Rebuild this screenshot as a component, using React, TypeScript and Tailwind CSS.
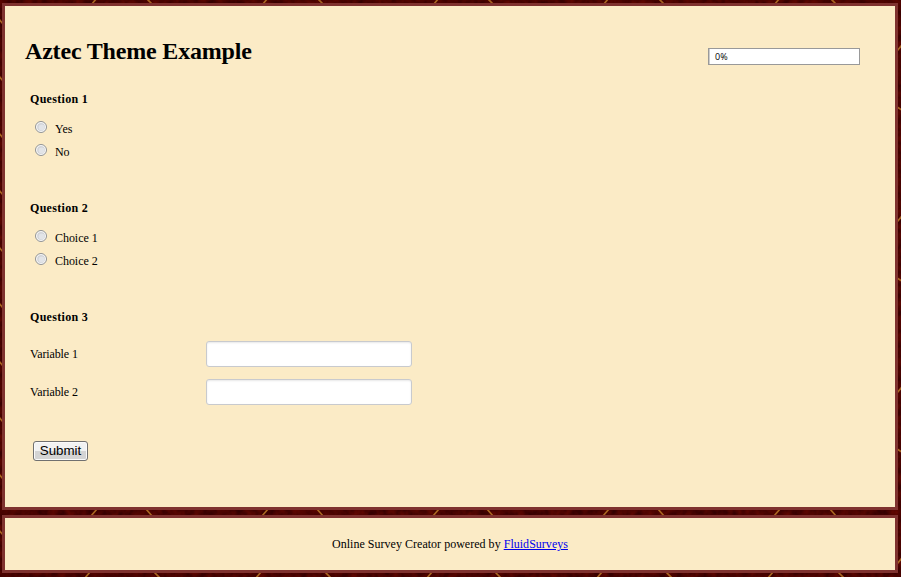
import React from 'react';

const slashes = [94, 265, 436, 606, 777];
const backslashes = [150, 321, 491, 662, 834];
const leftMarks = [22, 79, 136, 193, 250, 306, 364, 420, 477, 533];
const rightMarks = [48, 108, 219, 279, 390, 450, 561];

function Backdrop() {
  return (
    <svg className="absolute inset-0 -z-10" width="901" height="577" fill="none">
      <filter id="grain" colorInterpolationFilters="sRGB">
        <feTurbulence type="fractalNoise" baseFrequency="0.12" numOctaves="3" seed="4" />
        <feColorMatrix values="0.5 0 0 0 0.05  0.08 0 0 0 -0.02  0 0 0 0 0  0 0 0 0 1" />
      </filter>
      <rect width="901" height="577" fill="#450000" />
      <rect width="901" height="577" filter="url(#grain)" opacity="0.5" />
      <g stroke="#a86520" strokeWidth="1.7">
        {slashes.map((x) => (
          <path key={x} d={`M${x + 2} -1l-4 5M${x + 3} 509l-6 7M${x - 4} 572l-5 6`} />
        ))}
        {backslashes.map((x) => (
          <path key={x} d={`M${x - 3} -1l5 5M${x - 4} 509l6 7M${x + 4} 572l6 6`} />
        ))}
        {leftMarks.map((y) => (
          <path key={y} d={`M-1 ${y - 3}l4 5`} />
        ))}
        {rightMarks.map((y, i) => (
          <path key={y} d={i % 2 === 0 ? `M902 ${y - 3}l-5 6` : `M897 ${y - 1}l5 3`} />
        ))}
      </g>
    </svg>
  );
}

function Radio({ label }: { label: string }) {
  return (
    <label className="flex h-[23px] items-start pl-[5px]">
      <svg width="12" height="12" className="mt-[3px] shrink-0">
        <circle cx="6" cy="6" r="5.5" fill="#fafafa" stroke="#909293" />
        <circle cx="6" cy="6" r="3.9" fill="#d2d4d8" />
        <circle cx="6.6" cy="6.6" r="3" fill="#e2e4e7" />
      </svg>
      <span className="ml-2 mt-[3px] leading-4 tracking-[-0.05px]">{label}</span>
    </label>
  );
}

function Choices({ title, options }: { title: string; options: string[] }) {
  return (
    <section className="h-[109px]">
      <h2 className="mb-[11px] font-bold leading-4 tracking-[0.3px]">{title}</h2>
      {options.map((o) => <Radio key={o} label={o} />)}
    </section>
  );
}

function Field({ label }: { label: string }) {
  return (
    <label className="mb-3 flex h-[26px] items-center">
      <span className="w-44 leading-4 tracking-[-0.12px]">{label}</span>
      <input className="h-[26px] w-[206px] rounded-[3px] border border-[#c8cace] bg-white shadow-[inset_0_1px_2px_#00000018]" />
    </label>
  );
}

export default function App() {
  return (
    <div className="relative isolate h-[577px] w-[901px] overflow-hidden pl-[2px] pt-[3px] font-['Liberation_Serif',serif] text-[12px] text-black">
      <Backdrop />
      <main className="h-[507px] w-[896px] border-[3px] border-[#7f322f] bg-[#fbebc6] pl-[21px]">
        <header className="flex h-[85px] items-start justify-between pr-[35px] pt-[31px]">
          <h1 className="-ml-px text-[24px] font-bold leading-7 tracking-[-0.18px]">Aztec Theme Example</h1>
          <div className="mt-[11px] h-[17px] w-[152px] border border-[#999] bg-white pl-[6px] font-['Open_Sans',sans-serif] text-[9px] leading-[15px] shadow-[inset_1px_0_0_#ccc]">0%</div>
        </header>
        <div className="pl-1">
          <Choices title="Question 1" options={['Yes', 'No']} />
          <Choices title="Question 2" options={['Choice 1', 'Choice 2']} />
          <section>
            <h2 className="mb-4 font-bold leading-4 tracking-[0.3px]">Question 3</h2>
            <Field label="Variable 1" />
            <Field label="Variable 2" />
          </section>
          <button className="ml-[3px] mt-9 block h-5 w-[55px] rounded-[3px] border border-[#707070] bg-linear-to-b from-[#f2f2f2] from-50% to-[#d4d4d4] to-50% font-['Liberation_Sans',sans-serif] text-[13.33px] leading-[18px] shadow-[inset_0_0_0_1px_#fafafa]">Submit</button>
        </div>
      </main>
      <footer className="mt-[5px] flex h-[58px] w-[896px] items-center justify-center border-[3px] border-[#7f322f] bg-[#fbebc6]">
        <p className="leading-4 tracking-[0.02px]">Online Survey Creator powered by <a className="text-[#0000ee] underline" href="#">FluidSurveys</a></p>
      </footer>
    </div>
  );
}
